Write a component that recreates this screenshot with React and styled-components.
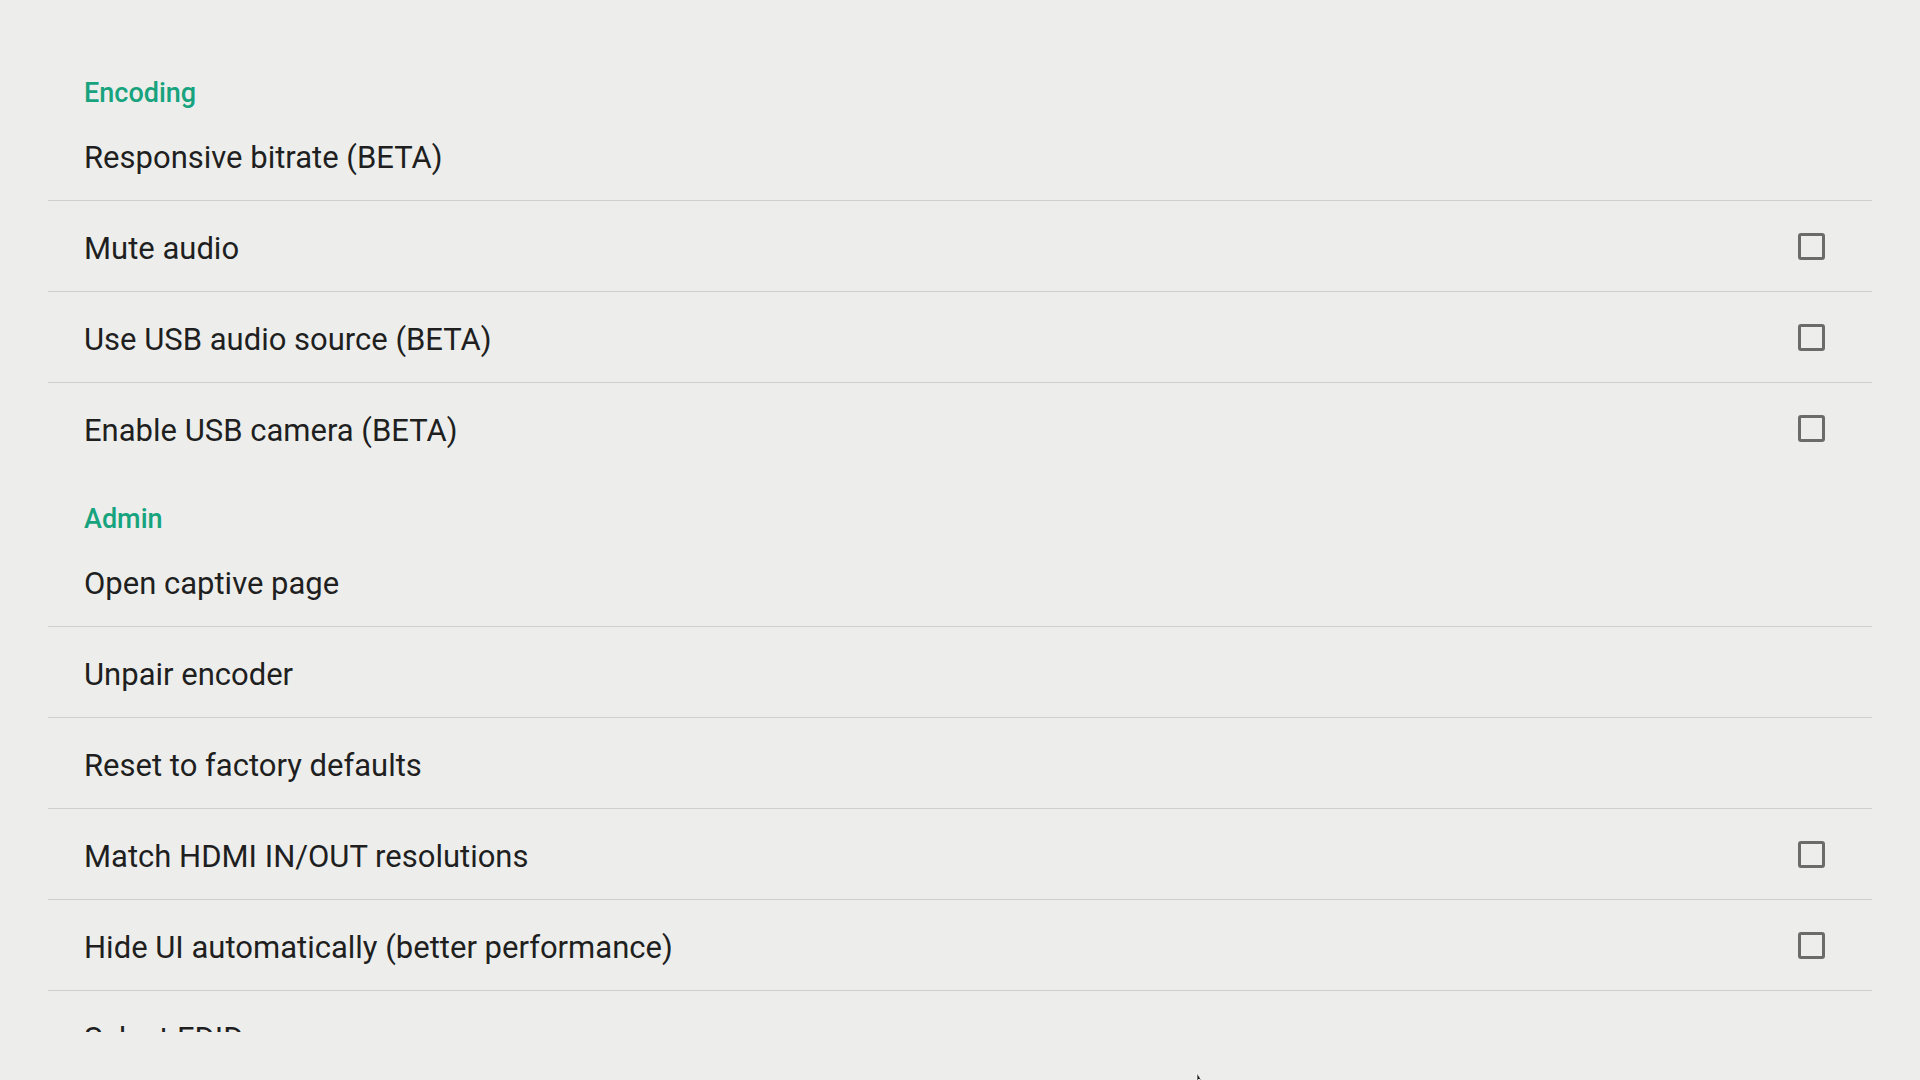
import styled, { createGlobalStyle } from "styled-components"

const GlobalStyle = createGlobalStyle`
	html, body {
		margin: 0;
		padding: 0;
		background: #edeeec;
	}
	body {
		font-family: Roboto, "Noto Sans", "Liberation Sans", sans-serif;
		-webkit-font-smoothing: antialiased;
	}
`

const sections = [
	{
		title: "Encoding",
		items: [
			{ label: "Responsive bitrate (BETA)" },
			{ label: "Mute audio", checkbox: true },
			{ label: "Use USB audio source (BETA)", checkbox: true },
			{ label: "Enable USB camera (BETA)", checkbox: true },
		],
	},
	{
		title: "Admin",
		items: [
			{ label: "Open captive page" },
			{ label: "Unpair encoder" },
			{ label: "Reset to factory defaults" },
			{ label: "Match HDMI IN/OUT resolutions", checkbox: true },
			{ label: "Hide UI automatically (better performance)", checkbox: true },
			{ label: "Select EDID" },
		],
	},
]

export default function App() {
	return (
		<Screen>
			<GlobalStyle />
			<SettingsList>
				{sections.map((section) => (
					<Section key={section.title}>
						<CategoryTitle>{section.title}</CategoryTitle>
						{section.items.map((item) => (
							<PreferenceRow key={item.label}>
								<PreferenceLabel>{item.label}</PreferenceLabel>
								{item.checkbox ? <CheckBox aria-label={item.label} /> : null}
							</PreferenceRow>
						))}
					</Section>
				))}
			</SettingsList>
			<Pointer width="10" height="8" viewBox="0 0 10 8">
				<path d="M1 0 L1 8 L3 6 L6 8 Z" fill="#111" stroke="#fff" strokeWidth="0.8" />
			</Pointer>
		</Screen>
	)
}

const Screen = styled.div`
	position: relative;
	width: 1920px;
	height: 1080px;
	overflow: hidden;
	background: #edeeec;
`

// the list is cut off just below the top of the last row, as on the device
const SettingsList = styled.div`
	box-sizing: border-box;
	height: 1032px;
	overflow: hidden;
	padding: 48px 48px 0 48px;
`

const Section = styled.section`
	display: flex;
	flex-direction: column;
`

const CategoryTitle = styled.div`
	box-sizing: border-box;
	height: 62px;
	padding: 32px 36px 0 36px;
	font-size: 27px;
	line-height: 26px;
	font-weight: 500;
	color: #17a37d;
`

const PreferenceRow = styled.div`
	box-sizing: border-box;
	height: 91px;
	display: flex;
	align-items: center;
	justify-content: space-between;
	padding: 0 47px 0 36px;
	border-bottom: 1px solid #cfd0ce;

	&:last-child {
		border-bottom: none;
	}
`

const PreferenceLabel = styled.span`
	font-size: 31px;
	color: #1f1f1f;
	white-space: nowrap;
	margin-top: 4px;
`

const CheckBox = styled.span`
	box-sizing: border-box;
	width: 27px;
	height: 27px;
	border: 3px solid #6b6b6b;
	border-radius: 3px;
`

const Pointer = styled.svg`
	position: absolute;
	left: 1196px;
	top: 1073px;
`
